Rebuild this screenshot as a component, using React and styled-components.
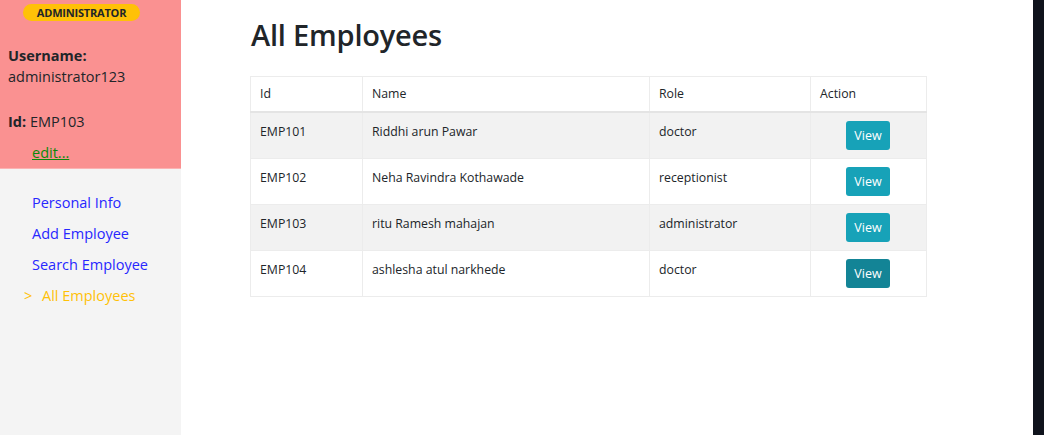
import styled, { createGlobalStyle } from "styled-components";

const employees = [
    { id: "EMP101", name: "Riddhi arun Pawar", role: "doctor" },
    { id: "EMP102", name: "Neha Ravindra Kothawade", role: "receptionist" },
    { id: "EMP103", name: "ritu Ramesh mahajan", role: "administrator" },
    { id: "EMP104", name: "ashlesha atul narkhede", role: "doctor", focused: true },
];

const links = ["Personal Info", "Add Employee", "Search Employee", "All Employees"];

export default function App() {
    return (
        <>
            <GlobalStyle />
            <Page>
                <Sidebar>
                    <Profile>
                        <Badge>ADMINISTRATOR</Badge>
                        <Field>
                            <b>Username:</b>
                            <br />
                            administrator123
                        </Field>
                        <Field>
                            <b>Id:</b> EMP103
                        </Field>
                        <EditLink href="#">edit...</EditLink>
                    </Profile>
                    <Nav>
                        {links.map((link) => (
                            <NavLink key={link} $active={link === "All Employees"}>
                                {link === "All Employees" && <Arrow>&gt;</Arrow>}
                                {link}
                            </NavLink>
                        ))}
                    </Nav>
                </Sidebar>
                <Main>
                    <Title>All Employees</Title>
                    <Table>
                        <thead>
                            <tr>
                                <Th $w={112}>Id</Th>
                                <Th $w={287}>Name</Th>
                                <Th $w={161}>Role</Th>
                                <Th>Action</Th>
                            </tr>
                        </thead>
                        <tbody>
                            {employees.map((e, i) => (
                                <Row key={e.id} $striped={i % 2 === 0}>
                                    <Td>{e.id}</Td>
                                    <Td>{e.name}</Td>
                                    <Td>{e.role}</Td>
                                    <ActionCell>
                                        <ViewButton $focused={e.focused}>View</ViewButton>
                                    </ActionCell>
                                </Row>
                            ))}
                        </tbody>
                    </Table>
                </Main>
                <Edge />
            </Page>
        </>
    );
}

const GlobalStyle = createGlobalStyle`
    * {
        box-sizing: border-box;
    }

    body {
        margin: 0;
        font-family: "Open Sans", "Noto Sans", sans-serif;
        color: #212529;
        background: white;
    }
`;

const Page = styled.div`
    width: 100%;
    height: 435px;

    display: flex;
`;

const Sidebar = styled.div`
    width: 181px;
    height: 100%;

    display: flex;
    flex-direction: column;

    background-color: #f4f4f4;
`;

const Profile = styled.div`
    height: 169px;

    padding: 4px 0 0 8px;

    display: flex;
    flex-direction: column;

    background-color: #fa9191;
    border-bottom: 1px solid #fbb3b3;
`;

const Badge = styled.div`
    width: 117px;
    height: 17px;

    margin-left: 15px;

    display: flex;
    align-items: center;
    justify-content: center;

    border-radius: 9px;
    background-color: #ffc107;

    font-size: 11px;
    font-weight: 700;
    letter-spacing: -0.2px;
    color: #212529;
`;

const Field = styled.div`
    margin-top: 24px;

    font-size: 14.5px;
    line-height: 21px;
    color: #212529;

    b {
        font-weight: 700;
    }
`;

const EditLink = styled.a`
    margin: 11px 0 0 24px;

    font-size: 14.5px;
    color: #0a8a0a;
    text-decoration: underline;
`;

const Nav = styled.div`
    padding-top: 23px;

    display: flex;
    flex-direction: column;
    gap: 10px;
`;

const NavLink = styled.div`
    position: relative;

    padding-left: ${(p) => (p.$active ? "42px" : "32px")};

    font-size: 14.5px;
    line-height: 21px;
    color: ${(p) => (p.$active ? "#ffc107" : "#2727ff")};
`;

const Arrow = styled.span`
    position: absolute;
    left: 24px;
`;

const Main = styled.div`
    flex: 1;

    padding: 16px 0 0 69px;
`;

const Title = styled.h2`
    margin: 0 0 22px 1px;

    font-size: 29px;
    font-weight: 600;
    line-height: 38px;
    letter-spacing: -0.2px;
    color: #212529;
`;

const Table = styled.table`
    width: 677px;

    border-collapse: collapse;
    border: 1px solid #ececec;

    font-size: 12.3px;
    color: #212529;
`;

const Th = styled.th`
    width: ${(p) => (p.$w ? `${p.$w}px` : "auto")};
    height: 35px;

    padding: 0 9px;

    text-align: left;
    font-weight: 400;

    border: 1px solid #ececec;
    border-bottom: 2px solid #e4e4e4;
`;

const Row = styled.tr`
    background-color: ${(p) => (p.$striped ? "#f2f2f2" : "white")};
`;

const Td = styled.td`
    height: 46px;

    padding: 9px 9px;

    vertical-align: top;
    line-height: 20px;

    border: 1px solid #ececec;
`;

const ActionCell = styled(Td)`
    text-align: center;
    padding: 8px 9px;
`;

const ViewButton = styled.button`
    width: 44px;
    height: 29px;

    margin-left: -1px;

    border: none;
    border-radius: 3px;

    font-family: inherit;
    font-size: 12.5px;
    color: white;

    background-color: ${(p) => (p.$focused ? "#138496" : "#17a2b8")};
`;

const Edge = styled.div`
    width: 11px;
    height: 100%;

    background-color: #0f131c;
`;
